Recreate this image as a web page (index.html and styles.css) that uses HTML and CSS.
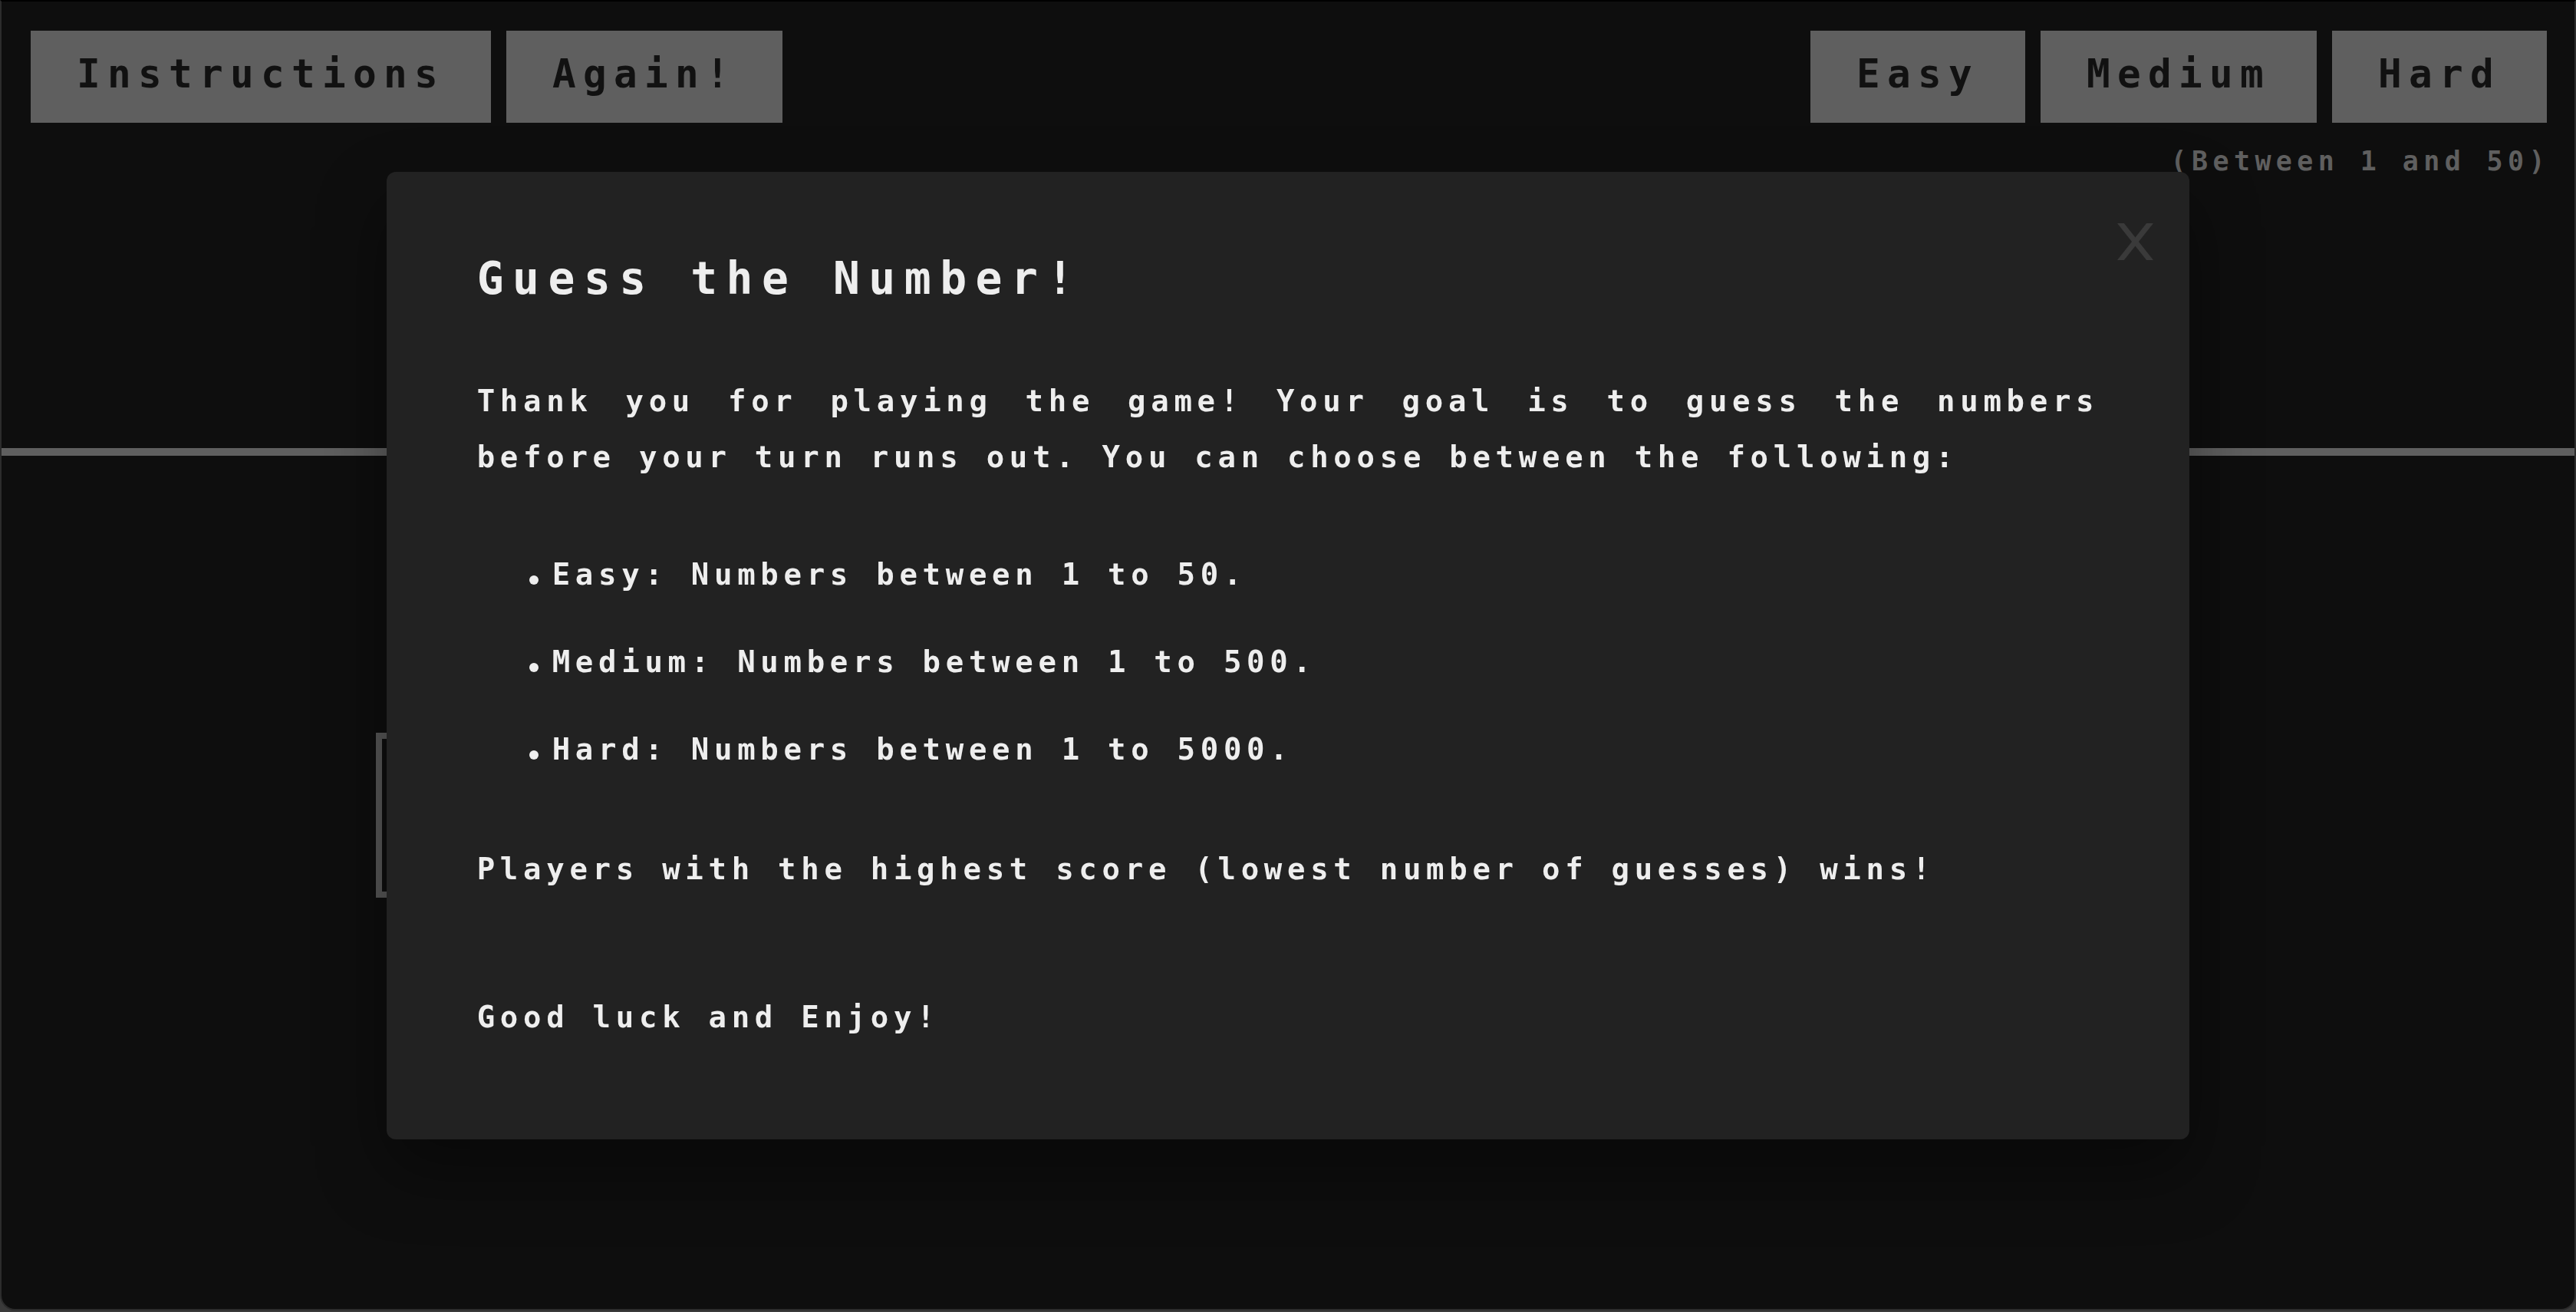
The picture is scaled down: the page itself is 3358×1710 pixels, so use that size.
FILE: index.html
```html
<!DOCTYPE html>
<html lang="en">
<head>
<meta charset="utf-8">
<title>Guess the Number!</title>
<link rel="stylesheet" href="styles.css">
</head>
<body>
<div class="app">
  <header class="header">
    <div class="toolbar">
      <div class="group">
        <button class="btn">Instructions</button>
        <button class="btn">Again!</button>
      </div>
      <div class="group">
        <button class="btn">Easy</button>
        <button class="btn">Medium</button>
        <button class="btn">Hard</button>
      </div>
    </div>
    <p class="hint">(Between 1 and 50)</p>
  </header>
  <main class="main">
    <div class="guess-box"></div>
  </main>
</div>

<div class="modal">
  <svg class="close" viewBox="0 0 47 48" aria-label="close">
    <line x1="2" y1="-3" x2="45" y2="51" stroke="#3a3a3a" stroke-width="7"/>
    <line x1="45" y1="-3" x2="2" y2="51" stroke="#3a3a3a" stroke-width="7"/>
  </svg>
  <h2 class="modal-title">Guess the Number!</h2>
  <p class="modal-text">Thank you for playing the game! Your goal is to guess the numbers before your turn runs out. You can choose between the following:</p>
  <ul class="modal-list">
    <li>Easy: Numbers between 1 to 50.</li>
    <li>Medium: Numbers between 1 to 500.</li>
    <li>Hard: Numbers between 1 to 5000.</li>
  </ul>
  <p class="modal-text modal-score">Players with the highest score (lowest number of guesses) wins!</p>
  <p class="modal-text">Good luck and Enjoy!</p>
</div>
</body>
</html>
```

FILE: styles.css
```css
html {
  background: #3a3a3a;
}

body {
  margin: 0;
  font-family: "DejaVu Sans Mono", "Liberation Mono", monospace;
  font-weight: 700;
}

.app {
  box-sizing: border-box;
  height: calc(100vh - 2px);
  background: #0e0e0e;
  border: 2px solid #2c2c2c;
  border-top-color: #000;
  border-radius: 0 0 20px 20px;
  overflow: hidden;
}

.header {
  padding: 38px 36px 354px 38px;
  border-bottom: 10px solid #5f5f5f;
}

.toolbar {
  display: flex;
  justify-content: space-between;
}

.group {
  display: flex;
  gap: 20px;
}

.btn {
  box-sizing: border-box;
  height: 120px;
  padding: 0 60px 6px;
  border: 0;
  border-radius: 0;
  background: #5f5f5f;
  color: #111;
  font: inherit;
  font-size: 51px;
  line-height: 114px;
  letter-spacing: 9.3px;
}

.hint {
  margin: 30px -4px 0 0;
  text-align: right;
  font-size: 35px;
  line-height: 40px;
  letter-spacing: 6.4px;
  color: #5f5f5f;
}

.main {
  padding: 361px 0 0 488px;
}

.guess-box {
  box-sizing: border-box;
  width: 1200px;
  height: 215px;
  border: 8px solid #575757;
}

.modal {
  position: fixed;
  top: 224px;
  left: 15%;
  width: 70%;
  box-sizing: border-box;
  padding: 106px 118px 123px;
  background: #222;
  border-radius: 12px;
  box-shadow: 0 40px 90px rgba(0, 0, 0, 0.4);
  color: #eee;
}

.close {
  position: absolute;
  top: 67px;
  right: 47px;
  width: 47px;
  height: 48px;
}

.modal-title {
  margin: 0 0 90px;
  font-size: 58px;
  line-height: 66px;
  letter-spacing: 11.5px;
  font-weight: 700;
}

.modal-text {
  margin: 0;
  font-size: 39px;
  line-height: 73px;
  letter-spacing: 6.7px;
  text-align: justify;
}

.modal-list {
  list-style: none;
  margin: 80px 0 83px;
  padding: 0 0 0 68px;
  font-size: 39px;
  line-height: 73px;
  letter-spacing: 6.7px;
}

.modal-list li + li {
  margin-top: 41px;
}

.modal-list li::before {
  content: "";
  display: inline-block;
  width: 12px;
  height: 12px;
  margin-right: 18px;
  border-radius: 50%;
  background: #eee;
}

.modal-score {
  margin-bottom: 120px;
}
```
